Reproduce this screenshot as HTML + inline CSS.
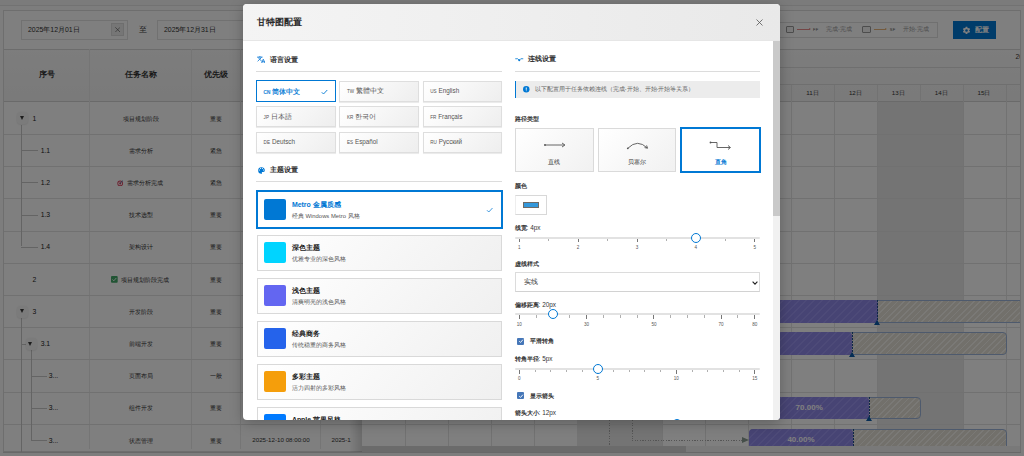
<!DOCTYPE html>
<html><head><meta charset="utf-8">
<style>
*{box-sizing:border-box;margin:0;padding:0}
html,body{width:1024px;height:456px;overflow:hidden;background:#f6f6f6;font-family:"Liberation Sans",sans-serif;color:#333}
.b{position:absolute}
.t{position:absolute;white-space:nowrap}
#page{position:absolute;left:0;top:0;width:1024px;height:456px;overflow:hidden}
#overlay{position:absolute;left:0;top:0;width:1024px;height:456px;background:rgba(0,0,0,0.5)}
#modal{position:absolute;left:243px;top:4px;width:537px;height:416px;background:#fff;border-radius:4px;overflow:hidden;box-shadow:0 3px 14px rgba(0,0,0,0.25)}
</style></head><body>
<div id="page">
<div class="b" style="left:0.00px;top:5.00px;width:1024.00px;height:1.00px;background:#e4e4e4"></div>
<div class="b" style="left:0.00px;top:6.00px;width:1024.00px;height:450.00px;background:#fbfbfb"></div>
<div class="b" style="left:3.00px;top:10.00px;width:1018.00px;height:442.00px;background:#fff;border:1px solid #dcdcdc"></div>
<div class="b" style="left:21.00px;top:20.00px;width:107.00px;height:19.50px;background:#fff;border:1px solid #e2e2e2"></div>
<div class="t" style="left:28.00px;top:25.52px;height:8.97px;line-height:8.97px;font-size:6.9px;color:#333;">2025年12月01日</div>
<div class="b" style="left:111.00px;top:23.00px;width:13.00px;height:12.50px;background:#ececec;border:1px solid #dcdcdc"></div>
<svg class="b" style="left:114.8px;top:26.6px" width="5.4" height="5.4" viewBox="0 0 6 6"><path d="M0.3 0.3L5.7 5.7M5.7 0.3L0.3 5.7" stroke="#555" stroke-width="0.7" fill="none"/></svg>
<div class="t" style="left:138.90px;top:24.66px;height:9.88px;line-height:9.88px;font-size:7.6px;color:#444;">至</div>
<div class="b" style="left:157.00px;top:20.00px;width:107.00px;height:19.50px;background:#fff;border:1px solid #e2e2e2"></div>
<div class="t" style="left:164.00px;top:25.52px;height:8.97px;line-height:8.97px;font-size:6.9px;color:#333;">2025年12月31日</div>
<div class="b" style="left:700.00px;top:21.50px;width:238.00px;height:16.00px;background:#fff;border:1px solid #e0e0e0"></div>
<div class="b" style="left:785.70px;top:26.30px;width:8.30px;height:6.60px;border:1px solid #9a9a9a;background:#f4f4f4;border-radius:1px"></div>
<div class="b" style="left:797.00px;top:29.30px;width:12.60px;height:0.70px;background:#e88a8a"></div>
<div class="b" style="left:808.60px;top:28.10px;width:0;height:0;border-top:1.3px solid transparent;border-bottom:1.3px solid transparent;border-left:2.6px solid #e88a8a"></div>
<div class="t" style="left:813.00px;top:27.20px;height:5.20px;line-height:5.20px;font-size:4.0px;color:#555;letter-spacing:0.3px">FF</div>
<div class="t" style="left:826.00px;top:25.96px;height:7.28px;line-height:7.28px;font-size:5.6px;color:#999;">完成-完成</div>
<div class="b" style="left:862.40px;top:26.30px;width:8.30px;height:6.60px;border:1px solid #9a9a9a;background:#f4f4f4;border-radius:1px"></div>
<div class="b" style="left:873.70px;top:29.30px;width:12.60px;height:0.70px;background:#e8b47a"></div>
<div class="b" style="left:885.30px;top:28.10px;width:0;height:0;border-top:1.3px solid transparent;border-bottom:1.3px solid transparent;border-left:2.6px solid #e8b47a"></div>
<div class="t" style="left:889.70px;top:27.20px;height:5.20px;line-height:5.20px;font-size:4.0px;color:#555;letter-spacing:0.3px">SF</div>
<div class="t" style="left:902.70px;top:25.96px;height:7.28px;line-height:7.28px;font-size:5.6px;color:#999;">开始-完成</div>
<div class="b" style="left:953.00px;top:21.00px;width:43.00px;height:18.00px;background:#0078d4"></div>
<svg class="b" style="left:962px;top:25.5px" width="9" height="9" viewBox="0 0 24 24"><path fill="#fff" d="M19.14 12.94a7.07 7.07 0 000-1.88l2.03-1.58a.5.5 0 00.12-.64l-1.92-3.32a.5.5 0 00-.6-.22l-2.39.96a7 7 0 00-1.63-.94l-.36-2.54A.5.5 0 0013.9 2h-3.84a.5.5 0 00-.49.42l-.36 2.54a7 7 0 00-1.63.94l-2.39-.96a.5.5 0 00-.6.22L2.67 8.48a.5.5 0 00.12.64l2.03 1.58a7.07 7.07 0 000 1.88l-2.03 1.58a.5.5 0 00-.12.64l1.92 3.32a.5.5 0 00.6.22l2.39-.96c.5.38 1.05.7 1.63.94l.36 2.54a.5.5 0 00.49.42h3.84a.5.5 0 00.49-.42l.36-2.54a7 7 0 001.63-.94l2.39.96a.5.5 0 00.6-.22l1.92-3.32a.5.5 0 00-.12-.64zM12 15.5A3.5 3.5 0 1112 8.5a3.5 3.5 0 010 7z"/></svg>
<div class="t" style="left:975.00px;top:25.52px;height:8.97px;line-height:8.97px;font-size:6.9px;color:#fff;font-weight:bold;">配置</div>
<div class="b" style="left:3.50px;top:48.50px;width:1016.50px;height:53.50px;background:linear-gradient(180deg,#fafafa,#f4f4f4)"></div>
<div class="b" style="left:3.50px;top:101.30px;width:1016.50px;height:1.20px;background:#d4d4d4"></div>
<div class="b" style="left:3.50px;top:48.50px;width:1016.50px;height:0.80px;background:#d8d8d8"></div>
<div class="b" style="left:89.20px;top:48.50px;width:0.80px;height:400.00px;background:#ebebeb"></div>
<div class="b" style="left:191.20px;top:48.50px;width:0.80px;height:400.00px;background:#ebebeb"></div>
<div class="b" style="left:240.40px;top:48.50px;width:0.80px;height:400.00px;background:#ebebeb"></div>
<div class="b" style="left:320.30px;top:48.50px;width:0.80px;height:400.00px;background:#ebebeb"></div>
<div class="t" style="left:-153.50px;width:400px;text-align:center;top:69.62px;height:9.75px;line-height:9.75px;font-size:7.5px;color:#333;font-weight:bold;">序号</div>
<div class="t" style="left:-59.40px;width:400px;text-align:center;top:69.62px;height:9.75px;line-height:9.75px;font-size:7.5px;color:#333;font-weight:bold;">任务名称</div>
<div class="t" style="left:16.00px;width:400px;text-align:center;top:69.62px;height:9.75px;line-height:9.75px;font-size:7.5px;color:#333;font-weight:bold;">优先级</div>
<div class="t" style="left:80.50px;width:400px;text-align:center;top:69.62px;height:9.75px;line-height:9.75px;font-size:7.5px;color:#333;font-weight:bold;">开始时间</div>
<div class="t" style="left:145.00px;width:400px;text-align:center;top:69.62px;height:9.75px;line-height:9.75px;font-size:7.5px;color:#333;font-weight:bold;">结束时间</div>
<div class="b" style="left:404.90px;top:84.30px;width:0.80px;height:362.00px;background:#e4e4e4"></div>
<div class="b" style="left:447.80px;top:84.30px;width:0.80px;height:362.00px;background:#e4e4e4"></div>
<div class="b" style="left:490.70px;top:84.30px;width:0.80px;height:362.00px;background:#e4e4e4"></div>
<div class="b" style="left:533.60px;top:84.30px;width:0.80px;height:362.00px;background:#e4e4e4"></div>
<div class="b" style="left:576.50px;top:84.30px;width:0.80px;height:362.00px;background:#e4e4e4"></div>
<div class="b" style="left:619.40px;top:84.30px;width:0.80px;height:362.00px;background:#e4e4e4"></div>
<div class="b" style="left:662.30px;top:84.30px;width:0.80px;height:362.00px;background:#e4e4e4"></div>
<div class="b" style="left:705.20px;top:84.30px;width:0.80px;height:362.00px;background:#e4e4e4"></div>
<div class="b" style="left:748.10px;top:84.30px;width:0.80px;height:362.00px;background:#e4e4e4"></div>
<div class="b" style="left:791.00px;top:84.30px;width:0.80px;height:362.00px;background:#e4e4e4"></div>
<div class="b" style="left:833.90px;top:84.30px;width:0.80px;height:362.00px;background:#e4e4e4"></div>
<div class="b" style="left:876.80px;top:84.30px;width:0.80px;height:362.00px;background:#e4e4e4"></div>
<div class="b" style="left:919.70px;top:84.30px;width:0.80px;height:362.00px;background:#e4e4e4"></div>
<div class="b" style="left:962.60px;top:84.30px;width:0.80px;height:362.00px;background:#e4e4e4"></div>
<div class="b" style="left:1005.50px;top:84.30px;width:0.80px;height:362.00px;background:#e4e4e4"></div>
<div class="b" style="left:577.30px;top:102.30px;width:85.00px;height:344.00px;background:#e8e8e8"></div>
<div class="b" style="left:877.60px;top:102.30px;width:85.00px;height:344.00px;background:#e8e8e8"></div>
<div class="b" style="left:1177.90px;top:102.30px;width:85.00px;height:344.00px;background:#e8e8e8"></div>
<div class="b" style="left:1478.20px;top:102.30px;width:85.00px;height:344.00px;background:#e8e8e8"></div>
<div class="b" style="left:362.00px;top:66.80px;width:658.00px;height:0.80px;background:#dedede"></div>
<div class="b" style="left:362.00px;top:84.30px;width:658.00px;height:0.80px;background:#dedede"></div>
<div class="b" style="left:0;top:0;width:1020px;height:456px;overflow:hidden">
<div class="t" style="left:183.45px;width:400px;text-align:center;top:89.17px;height:8.06px;line-height:8.06px;font-size:6.2px;color:#333;">1日</div>
<div class="t" style="left:226.35px;width:400px;text-align:center;top:89.17px;height:8.06px;line-height:8.06px;font-size:6.2px;color:#333;">2日</div>
<div class="t" style="left:269.25px;width:400px;text-align:center;top:89.17px;height:8.06px;line-height:8.06px;font-size:6.2px;color:#333;">3日</div>
<div class="t" style="left:312.15px;width:400px;text-align:center;top:89.17px;height:8.06px;line-height:8.06px;font-size:6.2px;color:#333;">4日</div>
<div class="t" style="left:355.05px;width:400px;text-align:center;top:89.17px;height:8.06px;line-height:8.06px;font-size:6.2px;color:#333;">5日</div>
<div class="t" style="left:397.95px;width:400px;text-align:center;top:89.17px;height:8.06px;line-height:8.06px;font-size:6.2px;color:#333;">6日</div>
<div class="t" style="left:440.85px;width:400px;text-align:center;top:89.17px;height:8.06px;line-height:8.06px;font-size:6.2px;color:#333;">7日</div>
<div class="t" style="left:483.75px;width:400px;text-align:center;top:89.17px;height:8.06px;line-height:8.06px;font-size:6.2px;color:#333;">8日</div>
<div class="t" style="left:526.65px;width:400px;text-align:center;top:89.17px;height:8.06px;line-height:8.06px;font-size:6.2px;color:#333;">9日</div>
<div class="t" style="left:569.55px;width:400px;text-align:center;top:89.17px;height:8.06px;line-height:8.06px;font-size:6.2px;color:#333;">10日</div>
<div class="t" style="left:612.45px;width:400px;text-align:center;top:89.17px;height:8.06px;line-height:8.06px;font-size:6.2px;color:#333;">11日</div>
<div class="t" style="left:655.35px;width:400px;text-align:center;top:89.17px;height:8.06px;line-height:8.06px;font-size:6.2px;color:#333;">12日</div>
<div class="t" style="left:698.25px;width:400px;text-align:center;top:89.17px;height:8.06px;line-height:8.06px;font-size:6.2px;color:#333;">13日</div>
<div class="t" style="left:741.15px;width:400px;text-align:center;top:89.17px;height:8.06px;line-height:8.06px;font-size:6.2px;color:#333;">14日</div>
<div class="t" style="left:784.05px;width:400px;text-align:center;top:89.17px;height:8.06px;line-height:8.06px;font-size:6.2px;color:#333;">15日</div>
<div class="t" style="left:826.95px;width:400px;text-align:center;top:89.17px;height:8.06px;line-height:8.06px;font-size:6.2px;color:#333;">16日</div>
</div>
<div class="b" style="left:0;top:0;width:1020px;height:456px;overflow:hidden">
<div class="t" style="left:1015.50px;top:53.31px;height:8.58px;line-height:8.58px;font-size:6.6px;color:#333;">2025年12月</div>
</div>
<div class="b" style="left:3.50px;top:133.90px;width:1016.50px;height:1.00px;background:#e3e3e3"></div>
<div class="b" style="left:3.50px;top:166.10px;width:1016.50px;height:1.00px;background:#e3e3e3"></div>
<div class="b" style="left:3.50px;top:198.30px;width:1016.50px;height:1.00px;background:#e3e3e3"></div>
<div class="b" style="left:3.50px;top:230.50px;width:1016.50px;height:1.00px;background:#e3e3e3"></div>
<div class="b" style="left:3.50px;top:262.70px;width:1016.50px;height:1.00px;background:#e3e3e3"></div>
<div class="b" style="left:3.50px;top:294.90px;width:1016.50px;height:1.00px;background:#e3e3e3"></div>
<div class="b" style="left:3.50px;top:327.10px;width:1016.50px;height:1.00px;background:#e3e3e3"></div>
<div class="b" style="left:3.50px;top:359.30px;width:1016.50px;height:1.00px;background:#e3e3e3"></div>
<div class="b" style="left:3.50px;top:391.50px;width:1016.50px;height:1.00px;background:#e3e3e3"></div>
<div class="b" style="left:3.50px;top:423.70px;width:1016.50px;height:1.00px;background:#e3e3e3"></div>
<div class="b" style="left:3.50px;top:455.90px;width:1016.50px;height:1.00px;background:#e3e3e3"></div>
<div class="b" style="left:21.00px;top:124.50px;width:0.90px;height:121.80px;background:#c8c8c8"></div>
<div class="b" style="left:21.00px;top:150.20px;width:17.40px;height:0.90px;background:#c8c8c8"></div>
<div class="b" style="left:21.00px;top:182.40px;width:17.40px;height:0.90px;background:#c8c8c8"></div>
<div class="b" style="left:21.00px;top:214.60px;width:17.40px;height:0.90px;background:#c8c8c8"></div>
<div class="b" style="left:21.00px;top:246.80px;width:17.40px;height:0.90px;background:#c8c8c8"></div>
<div class="b" style="left:21.00px;top:317.60px;width:0.90px;height:134.40px;background:#c8c8c8"></div>
<div class="b" style="left:21.00px;top:343.60px;width:5.00px;height:0.90px;background:#c8c8c8"></div>
<div class="b" style="left:30.50px;top:350.00px;width:0.90px;height:90.40px;background:#c8c8c8"></div>
<div class="b" style="left:30.50px;top:375.60px;width:16.00px;height:0.90px;background:#c8c8c8"></div>
<div class="b" style="left:30.50px;top:407.80px;width:16.00px;height:0.90px;background:#c8c8c8"></div>
<div class="b" style="left:30.50px;top:440.00px;width:16.00px;height:0.90px;background:#c8c8c8"></div>
<div class="b" style="left:16.80px;top:112.30px;width:11.60px;height:12.10px;background:#f7f7f7;border-radius:3.5px;box-shadow:0 0.5px 2px rgba(0,0,0,.12)"></div>
<div class="b" style="left:19.70px;top:116.10px;width:0;height:0;border-left:2.9px solid transparent;border-right:2.9px solid transparent;border-top:4.4px solid #3a3a3a"></div>
<div class="t" style="left:32.50px;top:114.58px;height:8.84px;line-height:8.84px;font-size:6.8px;color:#222;">1</div>
<div class="t" style="left:-59.40px;width:400px;text-align:center;top:114.64px;height:8.32px;line-height:8.32px;font-size:6.4px;color:#333;">项目规划阶段</div>
<div class="t" style="left:16.00px;width:400px;text-align:center;top:114.64px;height:8.32px;line-height:8.32px;font-size:6.4px;color:#333;">重要</div>
<div class="t" style="left:81.00px;width:400px;text-align:center;top:114.37px;height:8.06px;line-height:8.06px;font-size:6.2px;color:#333;">2025-12-10 08:00:00</div>
<div class="b" style="left:0;top:0;width:351px;height:456px;overflow:hidden">
<div class="t" style="left:331.50px;top:114.37px;height:8.06px;line-height:8.06px;font-size:6.2px;color:#333;">2025-12-20 18:00:00</div>
</div>
<div class="t" style="left:40.70px;top:146.78px;height:8.84px;line-height:8.84px;font-size:6.8px;color:#222;">1.1</div>
<div class="t" style="left:-59.40px;width:400px;text-align:center;top:146.84px;height:8.32px;line-height:8.32px;font-size:6.4px;color:#333;">需求分析</div>
<div class="t" style="left:16.00px;width:400px;text-align:center;top:146.84px;height:8.32px;line-height:8.32px;font-size:6.4px;color:#333;">紧急</div>
<div class="t" style="left:81.00px;width:400px;text-align:center;top:146.57px;height:8.06px;line-height:8.06px;font-size:6.2px;color:#333;">2025-12-10 08:00:00</div>
<div class="b" style="left:0;top:0;width:351px;height:456px;overflow:hidden">
<div class="t" style="left:331.50px;top:146.57px;height:8.06px;line-height:8.06px;font-size:6.2px;color:#333;">2025-12-20 18:00:00</div>
</div>
<div class="t" style="left:40.70px;top:178.98px;height:8.84px;line-height:8.84px;font-size:6.8px;color:#222;">1.2</div>
<svg class="b" style="left:117px;top:179.70px" width="6.4" height="6.4" viewBox="0 0 10 10"><circle cx="5" cy="5.3" r="4.5" fill="#d8435f"/><circle cx="5" cy="5.3" r="3" fill="#fff"/><circle cx="5" cy="5.3" r="1.6" fill="#d8435f"/><path d="M5 5L9.5 0.8" stroke="#3a6fb0" stroke-width="1.2"/></svg>
<div class="t" style="left:126.90px;top:179.04px;height:8.32px;line-height:8.32px;font-size:6.4px;color:#333;">需求分析完成</div>
<div class="t" style="left:16.00px;width:400px;text-align:center;top:179.04px;height:8.32px;line-height:8.32px;font-size:6.4px;color:#333;">紧急</div>
<div class="t" style="left:81.00px;width:400px;text-align:center;top:178.77px;height:8.06px;line-height:8.06px;font-size:6.2px;color:#333;">2025-12-10 08:00:00</div>
<div class="b" style="left:0;top:0;width:351px;height:456px;overflow:hidden">
<div class="t" style="left:331.50px;top:178.77px;height:8.06px;line-height:8.06px;font-size:6.2px;color:#333;">2025-12-20 18:00:00</div>
</div>
<div class="t" style="left:40.70px;top:211.18px;height:8.84px;line-height:8.84px;font-size:6.8px;color:#222;">1.3</div>
<div class="t" style="left:-59.40px;width:400px;text-align:center;top:211.24px;height:8.32px;line-height:8.32px;font-size:6.4px;color:#333;">技术选型</div>
<div class="t" style="left:16.00px;width:400px;text-align:center;top:211.24px;height:8.32px;line-height:8.32px;font-size:6.4px;color:#333;">重要</div>
<div class="t" style="left:81.00px;width:400px;text-align:center;top:210.97px;height:8.06px;line-height:8.06px;font-size:6.2px;color:#333;">2025-12-10 08:00:00</div>
<div class="b" style="left:0;top:0;width:351px;height:456px;overflow:hidden">
<div class="t" style="left:331.50px;top:210.97px;height:8.06px;line-height:8.06px;font-size:6.2px;color:#333;">2025-12-20 18:00:00</div>
</div>
<div class="t" style="left:40.70px;top:243.38px;height:8.84px;line-height:8.84px;font-size:6.8px;color:#222;">1.4</div>
<div class="t" style="left:-59.40px;width:400px;text-align:center;top:243.44px;height:8.32px;line-height:8.32px;font-size:6.4px;color:#333;">架构设计</div>
<div class="t" style="left:16.00px;width:400px;text-align:center;top:243.44px;height:8.32px;line-height:8.32px;font-size:6.4px;color:#333;">重要</div>
<div class="t" style="left:81.00px;width:400px;text-align:center;top:243.17px;height:8.06px;line-height:8.06px;font-size:6.2px;color:#333;">2025-12-10 08:00:00</div>
<div class="b" style="left:0;top:0;width:351px;height:456px;overflow:hidden">
<div class="t" style="left:331.50px;top:243.17px;height:8.06px;line-height:8.06px;font-size:6.2px;color:#333;">2025-12-20 18:00:00</div>
</div>
<div class="t" style="left:32.50px;top:275.58px;height:8.84px;line-height:8.84px;font-size:6.8px;color:#222;">2</div>
<svg class="b" style="left:110.9px;top:276.20px" width="6.7" height="6.7" viewBox="0 0 10 10"><rect width="10" height="10" rx="1.5" fill="#43a868"/><path d="M2.2 5.2L4.2 7.2L7.9 3" stroke="#fff" stroke-width="1.3" fill="none"/></svg>
<div class="t" style="left:120.70px;top:275.64px;height:8.32px;line-height:8.32px;font-size:6.4px;color:#333;">项目规划阶段完成</div>
<div class="t" style="left:16.00px;width:400px;text-align:center;top:275.64px;height:8.32px;line-height:8.32px;font-size:6.4px;color:#333;">重要</div>
<div class="t" style="left:81.00px;width:400px;text-align:center;top:275.37px;height:8.06px;line-height:8.06px;font-size:6.2px;color:#333;">2025-12-10 08:00:00</div>
<div class="b" style="left:0;top:0;width:351px;height:456px;overflow:hidden">
<div class="t" style="left:331.50px;top:275.37px;height:8.06px;line-height:8.06px;font-size:6.2px;color:#333;">2025-12-20 18:00:00</div>
</div>
<div class="b" style="left:16.80px;top:305.50px;width:11.60px;height:12.10px;background:#f7f7f7;border-radius:3.5px;box-shadow:0 0.5px 2px rgba(0,0,0,.12)"></div>
<div class="b" style="left:19.70px;top:309.30px;width:0;height:0;border-left:2.9px solid transparent;border-right:2.9px solid transparent;border-top:4.4px solid #3a3a3a"></div>
<div class="t" style="left:32.50px;top:307.78px;height:8.84px;line-height:8.84px;font-size:6.8px;color:#222;">3</div>
<div class="t" style="left:-59.40px;width:400px;text-align:center;top:307.84px;height:8.32px;line-height:8.32px;font-size:6.4px;color:#333;">开发阶段</div>
<div class="t" style="left:16.00px;width:400px;text-align:center;top:307.84px;height:8.32px;line-height:8.32px;font-size:6.4px;color:#333;">重要</div>
<div class="t" style="left:81.00px;width:400px;text-align:center;top:307.57px;height:8.06px;line-height:8.06px;font-size:6.2px;color:#333;">2025-12-10 08:00:00</div>
<div class="b" style="left:0;top:0;width:351px;height:456px;overflow:hidden">
<div class="t" style="left:331.50px;top:307.57px;height:8.06px;line-height:8.06px;font-size:6.2px;color:#333;">2025-12-20 18:00:00</div>
</div>
<div class="b" style="left:25.50px;top:337.70px;width:11.60px;height:12.10px;background:#f7f7f7;border-radius:3.5px;box-shadow:0 0.5px 2px rgba(0,0,0,.12)"></div>
<div class="b" style="left:28.40px;top:341.50px;width:0;height:0;border-left:2.9px solid transparent;border-right:2.9px solid transparent;border-top:4.4px solid #3a3a3a"></div>
<div class="t" style="left:40.70px;top:339.98px;height:8.84px;line-height:8.84px;font-size:6.8px;color:#222;">3.1</div>
<div class="t" style="left:-59.40px;width:400px;text-align:center;top:340.04px;height:8.32px;line-height:8.32px;font-size:6.4px;color:#333;">前端开发</div>
<div class="t" style="left:16.00px;width:400px;text-align:center;top:340.04px;height:8.32px;line-height:8.32px;font-size:6.4px;color:#333;">重要</div>
<div class="t" style="left:81.00px;width:400px;text-align:center;top:339.77px;height:8.06px;line-height:8.06px;font-size:6.2px;color:#333;">2025-12-10 08:00:00</div>
<div class="b" style="left:0;top:0;width:351px;height:456px;overflow:hidden">
<div class="t" style="left:331.50px;top:339.77px;height:8.06px;line-height:8.06px;font-size:6.2px;color:#333;">2025-12-20 18:00:00</div>
</div>
<div class="t" style="left:48.80px;top:372.18px;height:8.84px;line-height:8.84px;font-size:6.8px;color:#222;">3...</div>
<div class="t" style="left:-59.40px;width:400px;text-align:center;top:372.24px;height:8.32px;line-height:8.32px;font-size:6.4px;color:#333;">页面布局</div>
<div class="t" style="left:16.00px;width:400px;text-align:center;top:372.24px;height:8.32px;line-height:8.32px;font-size:6.4px;color:#333;">一般</div>
<div class="t" style="left:81.00px;width:400px;text-align:center;top:371.97px;height:8.06px;line-height:8.06px;font-size:6.2px;color:#333;">2025-12-10 08:00:00</div>
<div class="b" style="left:0;top:0;width:351px;height:456px;overflow:hidden">
<div class="t" style="left:331.50px;top:371.97px;height:8.06px;line-height:8.06px;font-size:6.2px;color:#333;">2025-12-20 18:00:00</div>
</div>
<div class="t" style="left:48.80px;top:404.38px;height:8.84px;line-height:8.84px;font-size:6.8px;color:#222;">3...</div>
<div class="t" style="left:-59.40px;width:400px;text-align:center;top:404.44px;height:8.32px;line-height:8.32px;font-size:6.4px;color:#333;">组件开发</div>
<div class="t" style="left:16.00px;width:400px;text-align:center;top:404.44px;height:8.32px;line-height:8.32px;font-size:6.4px;color:#333;">重要</div>
<div class="t" style="left:81.00px;width:400px;text-align:center;top:404.17px;height:8.06px;line-height:8.06px;font-size:6.2px;color:#333;">2025-12-10 08:00:00</div>
<div class="b" style="left:0;top:0;width:351px;height:456px;overflow:hidden">
<div class="t" style="left:331.50px;top:404.17px;height:8.06px;line-height:8.06px;font-size:6.2px;color:#333;">2025-12-20 18:00:00</div>
</div>
<div class="t" style="left:48.80px;top:436.58px;height:8.84px;line-height:8.84px;font-size:6.8px;color:#222;">3...</div>
<div class="t" style="left:-59.40px;width:400px;text-align:center;top:436.64px;height:8.32px;line-height:8.32px;font-size:6.4px;color:#333;">状态管理</div>
<div class="t" style="left:16.00px;width:400px;text-align:center;top:436.64px;height:8.32px;line-height:8.32px;font-size:6.4px;color:#333;">重要</div>
<div class="t" style="left:81.00px;width:400px;text-align:center;top:436.37px;height:8.06px;line-height:8.06px;font-size:6.2px;color:#333;">2025-12-10 08:00:00</div>
<div class="b" style="left:0;top:0;width:351px;height:456px;overflow:hidden">
<div class="t" style="left:331.50px;top:436.37px;height:8.06px;line-height:8.06px;font-size:6.2px;color:#333;">2025-12-20 18:00:00</div>
</div>
<div class="b" style="left:349.00px;top:48.50px;width:13.00px;height:404.00px;background:linear-gradient(90deg,rgba(0,0,0,0),rgba(0,0,0,0.16))"></div>
<div class="b" style="left:0;top:0;width:1024px;height:456px;clip-path:inset(102px 4px 10px 362px)">
<div class="b" style="left:600.00px;top:300.20px;width:500.00px;height:22.50px;border-radius:4px;border:1px solid #9db5da;background:repeating-linear-gradient(-45deg,#e4e0d6 0 3.3px,#f4f2ec 3.3px 4.5px)"></div>
<div class="b" style="left:600.00px;top:300.20px;width:277.70px;height:22.50px;border-radius:4px;background:repeating-linear-gradient(-45deg,#8f88e8 0 4.2px,#9b94f0 4.2px 5.6px)"></div>
<div class="b" style="left:877.20px;top:300.20px;width:1.20px;height:22.50px;background:repeating-linear-gradient(180deg,#1e4e8c 0 2px,transparent 2px 3px)"></div>
<div class="b" style="left:874.10px;top:319.50px;width:0;height:0;border-left:3.6px solid transparent;border-right:3.6px solid transparent;border-bottom:5.4px solid #0a5aa8"></div>
<div class="b" style="left:600px;top:0;width:0;height:0"></div>
<div class="b" style="left:620.00px;top:332.40px;width:386.60px;height:22.50px;border-radius:4px;border:1px solid #9db5da;background:repeating-linear-gradient(-45deg,#e4e0d6 0 3.3px,#f4f2ec 3.3px 4.5px)"></div>
<div class="b" style="left:620.00px;top:332.40px;width:232.30px;height:22.50px;border-radius:4px;background:repeating-linear-gradient(-45deg,#8f88e8 0 4.2px,#9b94f0 4.2px 5.6px)"></div>
<div class="b" style="left:851.80px;top:332.40px;width:1.20px;height:22.50px;background:repeating-linear-gradient(180deg,#1e4e8c 0 2px,transparent 2px 3px)"></div>
<div class="b" style="left:848.70px;top:351.70px;width:0;height:0;border-left:3.6px solid transparent;border-right:3.6px solid transparent;border-bottom:5.4px solid #0a5aa8"></div>
<div class="b" style="left:640.00px;top:396.80px;width:281.40px;height:22.50px;border-radius:4px;border:1px solid #9db5da;background:repeating-linear-gradient(-45deg,#e4e0d6 0 3.3px,#f4f2ec 3.3px 4.5px)"></div>
<div class="b" style="left:640.00px;top:396.80px;width:229.20px;height:22.50px;border-radius:4px;background:repeating-linear-gradient(-45deg,#8f88e8 0 4.2px,#9b94f0 4.2px 5.6px)"></div>
<div class="b" style="left:868.70px;top:396.80px;width:1.20px;height:22.50px;background:repeating-linear-gradient(180deg,#1e4e8c 0 2px,transparent 2px 3px)"></div>
<div class="b" style="left:865.60px;top:416.10px;width:0;height:0;border-left:3.6px solid transparent;border-right:3.6px solid transparent;border-bottom:5.4px solid #0a5aa8"></div>
<div class="t" style="left:609.20px;width:400px;text-align:center;top:403.15px;height:10.40px;line-height:10.40px;font-size:8.0px;color:#fff;font-weight:bold;">70.00%</div>
<div class="b" style="left:749.00px;top:429.00px;width:258.00px;height:22.50px;border-radius:4px;border:1px solid #9db5da;background:repeating-linear-gradient(-45deg,#e4e0d6 0 3.3px,#f4f2ec 3.3px 4.5px)"></div>
<div class="b" style="left:749.00px;top:429.00px;width:104.00px;height:22.50px;border-radius:4px;background:repeating-linear-gradient(-45deg,#8f88e8 0 4.2px,#9b94f0 4.2px 5.6px)"></div>
<div class="b" style="left:852.50px;top:429.00px;width:1.20px;height:22.50px;background:repeating-linear-gradient(180deg,#1e4e8c 0 2px,transparent 2px 3px)"></div>
<div class="b" style="left:849.40px;top:448.30px;width:0;height:0;border-left:3.6px solid transparent;border-right:3.6px solid transparent;border-bottom:5.4px solid #0a5aa8"></div>
<div class="t" style="left:601.00px;width:400px;text-align:center;top:435.35px;height:10.40px;line-height:10.40px;font-size:8.0px;color:#fff;font-weight:bold;">40.00%</div>
<div class="b" style="left:608.90px;top:420.00px;width:0.90px;height:30.00px;background:repeating-linear-gradient(180deg,#aaaaaa 0 1.2px,transparent 1.2px 2.6px)"></div>
<div class="b" style="left:631.70px;top:420.00px;width:0.90px;height:20.50px;background:repeating-linear-gradient(180deg,#aaaaaa 0 1.2px,transparent 1.2px 2.6px)"></div>
<div class="b" style="left:631.70px;top:439.80px;width:111.00px;height:0.90px;background:repeating-linear-gradient(90deg,#aaaaaa 0 1.2px,transparent 1.2px 2.6px)"></div>
<div class="b" style="left:742.4px;top:436.6px;width:0;height:0;border-top:3.6px solid transparent;border-bottom:3.6px solid transparent;border-left:7px solid #8a9c92"></div>
</div>
<div class="b" style="left:362.00px;top:446.00px;width:658.00px;height:6.00px;background:#f3f3f3"></div>
<div class="b" style="left:362.00px;top:446.00px;width:324.00px;height:6.00px;background:#d6d6d6"></div>
<div class="b" style="left:3.00px;top:451.50px;width:1018.00px;height:1.00px;background:#d0d0d0"></div>
<div class="b" style="left:1019.50px;top:10.00px;width:1.00px;height:442.00px;background:#dcdcdc"></div>
</div>
<div id="overlay"></div>
<div id="modal">
<div class="b" style="left:0.00px;top:0.00px;width:537.00px;height:36.00px;background:linear-gradient(90deg,#f4f4f4,#e9e9e9)"></div>
<div class="b" style="left:0.00px;top:35.50px;width:537.00px;height:0.80px;background:#e6e6e6"></div>
<div class="t" style="left:14.00px;top:12.39px;height:12.03px;line-height:12.03px;font-size:9.25px;color:#2a2a2a;font-weight:bold;">甘特图配置</div>
<svg class="b" style="left:512.6px;top:14.8px" width="7" height="7" viewBox="0 0 7 7"><path d="M0.5 0.5L6.5 6.5M6.5 0.5L0.5 6.5" stroke="#555" stroke-width="0.8" fill="none"/></svg>
<svg class="b" style="left:13.600000000000023px;top:51.8px" width="8.4" height="7.4" viewBox="0 0 8.4 7.4"><g stroke="#1a80d8" stroke-width="0.9" fill="none" stroke-linecap="round"><path d="M0.6 1.1H5.2M2.9 0.3V1.1M1.2 1.6L4.6 5.2M4.4 1.6L0.9 5"/><path d="M4.6 7.1L6.3 3.2L8 7.1M5.2 5.8H7.4"/></g></svg>
<div class="t" style="left:27.00px;top:50.64px;height:9.71px;line-height:9.71px;font-size:7.47px;color:#333;font-weight:bold;">语言设置</div>
<div class="b" style="left:13.00px;top:67.00px;width:246.00px;height:1.00px;background:#dcdcdc"></div>
<div class="b" style="left:12.60px;top:76.00px;width:80.70px;height:22.00px;background:#fff;border:1.6px solid #0078d4"></div>
<div class="t" style="left:20.60px;top:84.11px;height:8.97px;line-height:8.97px;font-size:6.9px;color:#0078d4;-webkit-text-stroke:0.2px #0078d4"><span style="font-size:4.6px;font-weight:normal">CN</span> 简体中文</div>
<svg class="b" style="left:78.10px;top:84.50px" width="7" height="6" viewBox="0 0 14 12"><path d="M1.5 6.5L5 10L12.5 2" stroke="#0078d4" stroke-width="1.8" fill="none"/></svg>
<div class="b" style="left:96.40px;top:76.50px;width:79.70px;height:21.00px;background:linear-gradient(135deg,#ffffff,#eeeeee);border:1px solid #dedede;box-shadow:0 0.5px 0.6px rgba(0,0,0,.08)"></div>
<div class="t" style="left:103.90px;top:83.31px;height:8.97px;line-height:8.97px;font-size:6.9px;color:#555;"><span style="font-size:4.6px">TW</span> 繁體中文</div>
<div class="b" style="left:179.70px;top:76.50px;width:79.70px;height:21.00px;background:linear-gradient(135deg,#ffffff,#eeeeee);border:1px solid #dedede;box-shadow:0 0.5px 0.6px rgba(0,0,0,.08)"></div>
<div class="t" style="left:187.20px;top:83.31px;height:8.97px;line-height:8.97px;font-size:6.9px;color:#555;"><span style="font-size:4.6px">US</span> <span style="font-size:6.3px">English</span></div>
<div class="b" style="left:13.10px;top:102.00px;width:79.70px;height:21.00px;background:linear-gradient(135deg,#ffffff,#eeeeee);border:1px solid #dedede;box-shadow:0 0.5px 0.6px rgba(0,0,0,.08)"></div>
<div class="t" style="left:20.60px;top:108.81px;height:8.97px;line-height:8.97px;font-size:6.9px;color:#555;"><span style="font-size:4.6px">JP</span> 日本語</div>
<div class="b" style="left:96.40px;top:102.00px;width:79.70px;height:21.00px;background:linear-gradient(135deg,#ffffff,#eeeeee);border:1px solid #dedede;box-shadow:0 0.5px 0.6px rgba(0,0,0,.08)"></div>
<div class="t" style="left:103.90px;top:108.81px;height:8.97px;line-height:8.97px;font-size:6.9px;color:#555;"><span style="font-size:4.6px">KR</span> 한국어</div>
<div class="b" style="left:179.70px;top:102.00px;width:79.70px;height:21.00px;background:linear-gradient(135deg,#ffffff,#eeeeee);border:1px solid #dedede;box-shadow:0 0.5px 0.6px rgba(0,0,0,.08)"></div>
<div class="t" style="left:187.20px;top:108.81px;height:8.97px;line-height:8.97px;font-size:6.9px;color:#555;"><span style="font-size:4.6px">FR</span> <span style="font-size:6.3px">Français</span></div>
<div class="b" style="left:13.10px;top:127.50px;width:79.70px;height:21.00px;background:linear-gradient(135deg,#ffffff,#eeeeee);border:1px solid #dedede;box-shadow:0 0.5px 0.6px rgba(0,0,0,.08)"></div>
<div class="t" style="left:20.60px;top:134.31px;height:8.97px;line-height:8.97px;font-size:6.9px;color:#555;"><span style="font-size:4.6px">DE</span> <span style="font-size:6.3px">Deutsch</span></div>
<div class="b" style="left:96.40px;top:127.50px;width:79.70px;height:21.00px;background:linear-gradient(135deg,#ffffff,#eeeeee);border:1px solid #dedede;box-shadow:0 0.5px 0.6px rgba(0,0,0,.08)"></div>
<div class="t" style="left:103.90px;top:134.31px;height:8.97px;line-height:8.97px;font-size:6.9px;color:#555;"><span style="font-size:4.6px">ES</span> <span style="font-size:6.3px">Español</span></div>
<div class="b" style="left:179.70px;top:127.50px;width:79.70px;height:21.00px;background:linear-gradient(135deg,#ffffff,#eeeeee);border:1px solid #dedede;box-shadow:0 0.5px 0.6px rgba(0,0,0,.08)"></div>
<div class="t" style="left:187.20px;top:134.31px;height:8.97px;line-height:8.97px;font-size:6.9px;color:#555;"><span style="font-size:4.6px">RU</span> <span style="font-size:6.3px">Русский</span></div>
<svg class="b" style="left:14.5px;top:162.7px" width="7" height="7" viewBox="2.5 2.5 19 19"><path fill="#0078d4" d="M12 3a9 9 0 000 18c.83 0 1.5-.67 1.5-1.5 0-.39-.15-.74-.39-1.01-.23-.26-.38-.61-.38-.99 0-.83.67-1.5 1.5-1.5H16a5 5 0 005-5c0-4.42-4.03-8-9-8zm-5.5 9a1.5 1.5 0 110-3 1.5 1.5 0 010 3zm3-4a1.5 1.5 0 110-3 1.5 1.5 0 010 3zm5 0a1.5 1.5 0 110-3 1.5 1.5 0 010 3zm3 4a1.5 1.5 0 110-3 1.5 1.5 0 010 3z"/></svg>
<div class="t" style="left:27.00px;top:161.34px;height:9.71px;line-height:9.71px;font-size:7.47px;color:#333;font-weight:bold;">主题设置</div>
<div class="b" style="left:13.00px;top:177.20px;width:246.00px;height:1.00px;background:#dcdcdc"></div>
<div class="b" style="left:12.60px;top:186.20px;width:247.00px;height:38.60px;background:#fff;border:2px solid #0078d4"></div>
<div class="t" style="left:48.90px;top:196.00px;height:9.01px;line-height:9.01px;font-size:6.93px;color:#0078d4;font-weight:bold;">Metro 金属质感</div>
<svg class="b" style="left:243.00px;top:202.80px" width="7.5" height="6" viewBox="0 0 14 12"><path d="M1.5 6.5L5 10L12.5 2" stroke="#0078d4" stroke-width="1.5" fill="none"/></svg>
<div class="b" style="left:21.00px;top:194.70px;width:21.50px;height:21.80px;background:#0078d4;border-radius:2px"></div>
<div class="t" style="left:48.90px;top:208.78px;height:7.63px;line-height:7.63px;font-size:5.87px;color:#555;">经典 Windows Metro 风格</div>
<div class="b" style="left:13.60px;top:230.50px;width:245.20px;height:36.50px;background:linear-gradient(135deg,#ffffff,#f0f0f0);border:1px solid #d9d9d9"></div>
<div class="t" style="left:48.90px;top:239.00px;height:9.01px;line-height:9.01px;font-size:6.93px;color:#222;font-weight:bold;">深色主题</div>
<div class="b" style="left:21.00px;top:237.70px;width:21.50px;height:21.80px;background:#00d4ff;border-radius:2px"></div>
<div class="t" style="left:48.90px;top:251.78px;height:7.63px;line-height:7.63px;font-size:5.87px;color:#555;">优雅专业的深色风格</div>
<div class="b" style="left:13.60px;top:273.50px;width:245.20px;height:36.50px;background:linear-gradient(135deg,#ffffff,#f0f0f0);border:1px solid #d9d9d9"></div>
<div class="t" style="left:48.90px;top:282.00px;height:9.01px;line-height:9.01px;font-size:6.93px;color:#222;font-weight:bold;">浅色主题</div>
<div class="b" style="left:21.00px;top:280.70px;width:21.50px;height:21.80px;background:#6366f1;border-radius:2px"></div>
<div class="t" style="left:48.90px;top:294.78px;height:7.63px;line-height:7.63px;font-size:5.87px;color:#555;">清爽明亮的浅色风格</div>
<div class="b" style="left:13.60px;top:316.50px;width:245.20px;height:36.50px;background:linear-gradient(135deg,#ffffff,#f0f0f0);border:1px solid #d9d9d9"></div>
<div class="t" style="left:48.90px;top:325.00px;height:9.01px;line-height:9.01px;font-size:6.93px;color:#222;font-weight:bold;">经典商务</div>
<div class="b" style="left:21.00px;top:323.70px;width:21.50px;height:21.80px;background:#2563eb;border-radius:2px"></div>
<div class="t" style="left:48.90px;top:337.78px;height:7.63px;line-height:7.63px;font-size:5.87px;color:#555;">传统稳重的商务风格</div>
<div class="b" style="left:13.60px;top:359.50px;width:245.20px;height:36.50px;background:linear-gradient(135deg,#ffffff,#f0f0f0);border:1px solid #d9d9d9"></div>
<div class="t" style="left:48.90px;top:368.00px;height:9.01px;line-height:9.01px;font-size:6.93px;color:#222;font-weight:bold;">多彩主题</div>
<div class="b" style="left:21.00px;top:366.70px;width:21.50px;height:21.80px;background:#f59e0b;border-radius:2px"></div>
<div class="t" style="left:48.90px;top:380.78px;height:7.63px;line-height:7.63px;font-size:5.87px;color:#555;">活力四射的多彩风格</div>
<div class="b" style="left:13.60px;top:402.50px;width:245.20px;height:36.50px;background:linear-gradient(135deg,#ffffff,#f0f0f0);border:1px solid #d9d9d9"></div>
<div class="t" style="left:48.90px;top:411.00px;height:9.01px;line-height:9.01px;font-size:6.93px;color:#222;font-weight:bold;">Apple 苹果风格</div>
<div class="b" style="left:21.00px;top:409.70px;width:21.50px;height:21.80px;background:#007aff;border-radius:2px"></div>
<div class="t" style="left:48.90px;top:423.78px;height:7.63px;line-height:7.63px;font-size:5.87px;color:#555;">简洁优雅的苹果风格</div>
<svg class="b" style="left:272px;top:52.5px" width="8.5" height="5" viewBox="0 0 17 10"><path d="M0.5 3.5H5.5L8.5 6.5L11.5 3.5H16.5" stroke="#0078d4" stroke-width="1.6" fill="none"/><circle cx="8.5" cy="6.5" r="2" fill="#0078d4"/></svg>
<div class="t" style="left:284.50px;top:50.44px;height:9.71px;line-height:9.71px;font-size:7.47px;color:#333;font-weight:bold;">连线设置</div>
<div class="b" style="left:272.00px;top:67.00px;width:245.00px;height:1.00px;background:#dcdcdc"></div>
<div class="b" style="left:271.70px;top:76.70px;width:245.30px;height:17.00px;background:#ececec;border-left:1.6px solid #0078d4"></div>
<svg class="b" style="left:280.20000000000005px;top:82px" width="6.5" height="6.5" viewBox="0 0 10 10"><circle cx="5" cy="5" r="5" fill="#0078d4"/><path d="M5 2.3V5.8" stroke="#fff" stroke-width="1.4"/><circle cx="5" cy="7.4" r="0.75" fill="#fff"/></svg>
<div class="t" style="left:291.60px;top:82.48px;height:7.63px;line-height:7.63px;font-size:5.87px;color:#666;">以下配置用于任务依赖连线（完成-开始、开始-开始等关系）</div>
<div class="t" style="left:271.60px;top:110.54px;height:8.32px;line-height:8.32px;font-size:6.4px;color:#333;font-weight:bold;">路径类型</div>
<div class="b" style="left:272.10px;top:124.20px;width:78.60px;height:44.30px;background:linear-gradient(135deg,#ffffff,#f1f1f1);border:1px solid #dadada"></div>
<div class="t" style="left:111.40px;width:400px;text-align:center;top:154.78px;height:7.63px;line-height:7.63px;font-size:5.87px;color:#333;">直线</div>
<div class="b" style="left:354.90px;top:124.20px;width:78.60px;height:44.30px;background:linear-gradient(135deg,#ffffff,#f1f1f1);border:1px solid #dadada"></div>
<div class="t" style="left:194.20px;width:400px;text-align:center;top:154.78px;height:7.63px;line-height:7.63px;font-size:5.87px;color:#333;">贝塞尔</div>
<div class="b" style="left:437.20px;top:123.40px;width:80.70px;height:46.00px;background:#fff;border:2px solid #0078d4"></div>
<div class="t" style="left:277.70px;width:400px;text-align:center;top:154.78px;height:7.63px;line-height:7.63px;font-size:5.87px;color:#0078d4;font-weight:bold;">直角</div>
<svg class="b" style="left:301px;top:136px" width="22" height="10" viewBox="0 0 22 10"><path d="M0.5 5H20" stroke="#555" stroke-width="0.9" fill="none"/><path d="M18 3L21 5L18 7" stroke="#555" stroke-width="0.9" fill="none"/><circle cx="1" cy="5" r="0.9" fill="#555"/></svg>
<svg class="b" style="left:383px;top:136px" width="24" height="10" viewBox="0 0 24 10"><path d="M1.8 8.3Q11.5 -1.5 21.3 8" stroke="#555" stroke-width="0.9" fill="none"/><path d="M18.6 7.6L21.5 8.2L20.6 5.4" stroke="#555" stroke-width="0.9" fill="none"/><circle cx="1.8" cy="8.3" r="0.9" fill="#555"/></svg>
<svg class="b" style="left:466px;top:136.2px" width="24" height="12" viewBox="0 0 24 12"><path d="M1.5 2.5H8V7.5H21" stroke="#555" stroke-width="0.9" fill="none"/><path d="M19 5.5L21.5 7.5L19 9.5" stroke="#555" stroke-width="0.9" fill="none"/><circle cx="1.5" cy="2.5" r="0.9" fill="#555"/></svg>
<div class="t" style="left:271.60px;top:178.04px;height:8.32px;line-height:8.32px;font-size:6.4px;color:#333;font-weight:bold;">颜色</div>
<div class="b" style="left:271.80px;top:191.20px;width:31.80px;height:19.40px;background:#fff;border:1px solid #d8d8d8;border-left-color:#eeeeee"></div>
<div class="b" style="left:280.00px;top:198.00px;width:15.80px;height:5.80px;background:#3498db;border:0.7px solid #6e6a66"></div>
<div class="t" style="left:271.60px;top:219.84px;height:8.32px;line-height:8.32px;font-size:6.4px;color:#333;font-weight:bold;">线宽<span style="font-weight:normal">: 4px</span></div>
<div class="b" style="left:272.10px;top:232.60px;width:244.80px;height:2.00px;background:#e2e2e2;border-radius:1px"></div>
<div class="b" style="left:275.80px;top:234.80px;width:0.80px;height:3.60px;background:#777"></div>
<div class="b" style="left:305.24px;top:234.80px;width:0.80px;height:2.40px;background:#b0b0b0"></div>
<div class="b" style="left:334.68px;top:234.80px;width:0.80px;height:3.60px;background:#777"></div>
<div class="b" style="left:364.11px;top:234.80px;width:0.80px;height:2.40px;background:#b0b0b0"></div>
<div class="b" style="left:393.55px;top:234.80px;width:0.80px;height:3.60px;background:#777"></div>
<div class="b" style="left:422.99px;top:234.80px;width:0.80px;height:2.40px;background:#b0b0b0"></div>
<div class="b" style="left:452.43px;top:234.80px;width:0.80px;height:3.60px;background:#777"></div>
<div class="b" style="left:481.86px;top:234.80px;width:0.80px;height:2.40px;background:#b0b0b0"></div>
<div class="b" style="left:511.30px;top:234.80px;width:0.80px;height:3.60px;background:#777"></div>
<div class="t" style="left:76.20px;width:400px;text-align:center;top:241.01px;height:5.98px;line-height:5.98px;font-size:4.6px;color:#555;">1</div>
<div class="t" style="left:135.08px;width:400px;text-align:center;top:241.01px;height:5.98px;line-height:5.98px;font-size:4.6px;color:#555;">2</div>
<div class="t" style="left:193.95px;width:400px;text-align:center;top:241.01px;height:5.98px;line-height:5.98px;font-size:4.6px;color:#555;">3</div>
<div class="t" style="left:252.83px;width:400px;text-align:center;top:241.01px;height:5.98px;line-height:5.98px;font-size:4.6px;color:#555;">4</div>
<div class="t" style="left:311.70px;width:400px;text-align:center;top:241.01px;height:5.98px;line-height:5.98px;font-size:4.6px;color:#555;">5</div>
<div class="b" style="left:447.90px;top:228.60px;width:10.00px;height:10.00px;background:#fff;border:1.5px solid #0078d4;border-radius:50%"></div>
<div class="t" style="left:271.60px;top:255.74px;height:8.32px;line-height:8.32px;font-size:6.4px;color:#333;font-weight:bold;">虚线样式</div>
<div class="b" style="left:272.10px;top:268.30px;width:244.80px;height:19.80px;background:#fff;border:1px solid #dcdcdc;border-bottom-color:#d2d2d2"></div>
<div class="t" style="left:280.60px;top:273.91px;height:8.97px;line-height:8.97px;font-size:6.9px;color:#333;">实线</div>
<svg class="b" style="left:508.70000000000005px;top:276.9px" width="6" height="4" viewBox="0 0 6 4"><path d="M0.6 0.6L3 3.2L5.4 0.6" stroke="#222" stroke-width="1.1" fill="none"/></svg>
<div class="t" style="left:271.60px;top:296.74px;height:8.32px;line-height:8.32px;font-size:6.4px;color:#333;font-weight:bold;">偏移距离<span style="font-weight:normal">: 20px</span></div>
<div class="b" style="left:272.10px;top:309.20px;width:244.80px;height:2.00px;background:#e2e2e2;border-radius:1px"></div>
<div class="b" style="left:275.80px;top:311.40px;width:0.80px;height:3.60px;background:#777"></div>
<div class="b" style="left:292.62px;top:311.40px;width:0.80px;height:2.40px;background:#b0b0b0"></div>
<div class="b" style="left:309.44px;top:311.40px;width:0.80px;height:2.40px;background:#b0b0b0"></div>
<div class="b" style="left:326.26px;top:311.40px;width:0.80px;height:2.40px;background:#b0b0b0"></div>
<div class="b" style="left:343.08px;top:311.40px;width:0.80px;height:3.60px;background:#777"></div>
<div class="b" style="left:359.90px;top:311.40px;width:0.80px;height:2.40px;background:#b0b0b0"></div>
<div class="b" style="left:376.72px;top:311.40px;width:0.80px;height:2.40px;background:#b0b0b0"></div>
<div class="b" style="left:393.54px;top:311.40px;width:0.80px;height:2.40px;background:#b0b0b0"></div>
<div class="b" style="left:410.36px;top:311.40px;width:0.80px;height:3.60px;background:#777"></div>
<div class="b" style="left:427.18px;top:311.40px;width:0.80px;height:2.40px;background:#b0b0b0"></div>
<div class="b" style="left:444.00px;top:311.40px;width:0.80px;height:2.40px;background:#b0b0b0"></div>
<div class="b" style="left:460.82px;top:311.40px;width:0.80px;height:2.40px;background:#b0b0b0"></div>
<div class="b" style="left:477.64px;top:311.40px;width:0.80px;height:3.60px;background:#777"></div>
<div class="b" style="left:494.46px;top:311.40px;width:0.80px;height:2.40px;background:#b0b0b0"></div>
<div class="b" style="left:511.28px;top:311.40px;width:0.80px;height:3.60px;background:#777"></div>
<div class="t" style="left:76.20px;width:400px;text-align:center;top:317.61px;height:5.98px;line-height:5.98px;font-size:4.6px;color:#555;">10</div>
<div class="t" style="left:143.50px;width:400px;text-align:center;top:317.61px;height:5.98px;line-height:5.98px;font-size:4.6px;color:#555;">30</div>
<div class="t" style="left:211.00px;width:400px;text-align:center;top:317.61px;height:5.98px;line-height:5.98px;font-size:4.6px;color:#555;">50</div>
<div class="t" style="left:278.00px;width:400px;text-align:center;top:317.61px;height:5.98px;line-height:5.98px;font-size:4.6px;color:#555;">70</div>
<div class="t" style="left:311.70px;width:400px;text-align:center;top:317.61px;height:5.98px;line-height:5.98px;font-size:4.6px;color:#555;">80</div>
<div class="b" style="left:305.10px;top:305.20px;width:10.00px;height:10.00px;background:#fff;border:1.5px solid #0078d4;border-radius:50%"></div>
<div class="b" style="left:274.00px;top:333.50px;width:7.00px;height:7.00px;background:#4677b8;border-radius:1px"></div>
<svg class="b" style="left:274.5px;top:334px" width="6" height="6" viewBox="0 0 10 10"><path d="M2 5.2L4.2 7.4L8.2 2.8" stroke="#fff" stroke-width="1.5" fill="none"/></svg>
<div class="t" style="left:287.20px;top:332.84px;height:8.32px;line-height:8.32px;font-size:6.4px;color:#333;font-weight:bold;">平滑转角</div>
<div class="t" style="left:271.60px;top:350.64px;height:8.32px;line-height:8.32px;font-size:6.4px;color:#333;font-weight:bold;">转角半径<span style="font-weight:normal">: 5px</span></div>
<div class="b" style="left:272.10px;top:363.90px;width:244.80px;height:2.00px;background:#e2e2e2;border-radius:1px"></div>
<div class="b" style="left:275.80px;top:366.10px;width:0.80px;height:3.60px;background:#777"></div>
<div class="b" style="left:291.50px;top:366.10px;width:0.80px;height:2.40px;background:#b0b0b0"></div>
<div class="b" style="left:307.20px;top:366.10px;width:0.80px;height:2.40px;background:#b0b0b0"></div>
<div class="b" style="left:322.90px;top:366.10px;width:0.80px;height:2.40px;background:#b0b0b0"></div>
<div class="b" style="left:338.60px;top:366.10px;width:0.80px;height:2.40px;background:#b0b0b0"></div>
<div class="b" style="left:354.30px;top:366.10px;width:0.80px;height:3.60px;background:#777"></div>
<div class="b" style="left:370.00px;top:366.10px;width:0.80px;height:2.40px;background:#b0b0b0"></div>
<div class="b" style="left:385.70px;top:366.10px;width:0.80px;height:2.40px;background:#b0b0b0"></div>
<div class="b" style="left:401.40px;top:366.10px;width:0.80px;height:2.40px;background:#b0b0b0"></div>
<div class="b" style="left:417.10px;top:366.10px;width:0.80px;height:2.40px;background:#b0b0b0"></div>
<div class="b" style="left:432.80px;top:366.10px;width:0.80px;height:3.60px;background:#777"></div>
<div class="b" style="left:448.50px;top:366.10px;width:0.80px;height:2.40px;background:#b0b0b0"></div>
<div class="b" style="left:464.20px;top:366.10px;width:0.80px;height:2.40px;background:#b0b0b0"></div>
<div class="b" style="left:479.90px;top:366.10px;width:0.80px;height:2.40px;background:#b0b0b0"></div>
<div class="b" style="left:495.60px;top:366.10px;width:0.80px;height:2.40px;background:#b0b0b0"></div>
<div class="b" style="left:511.30px;top:366.10px;width:0.80px;height:3.60px;background:#777"></div>
<div class="t" style="left:76.20px;width:400px;text-align:center;top:372.31px;height:5.98px;line-height:5.98px;font-size:4.6px;color:#555;">0</div>
<div class="t" style="left:154.70px;width:400px;text-align:center;top:372.31px;height:5.98px;line-height:5.98px;font-size:4.6px;color:#555;">5</div>
<div class="t" style="left:233.20px;width:400px;text-align:center;top:372.31px;height:5.98px;line-height:5.98px;font-size:4.6px;color:#555;">10</div>
<div class="t" style="left:311.70px;width:400px;text-align:center;top:372.31px;height:5.98px;line-height:5.98px;font-size:4.6px;color:#555;">15</div>
<div class="b" style="left:350.20px;top:359.90px;width:10.00px;height:10.00px;background:#fff;border:1.5px solid #0078d4;border-radius:50%"></div>
<div class="b" style="left:274.00px;top:388.20px;width:7.00px;height:7.00px;background:#4677b8;border-radius:1px"></div>
<svg class="b" style="left:274.5px;top:388.7px" width="6" height="6" viewBox="0 0 10 10"><path d="M2 5.2L4.2 7.4L8.2 2.8" stroke="#fff" stroke-width="1.5" fill="none"/></svg>
<div class="t" style="left:287.20px;top:387.54px;height:8.32px;line-height:8.32px;font-size:6.4px;color:#333;font-weight:bold;">显示箭头</div>
<div class="t" style="left:271.60px;top:405.24px;height:8.32px;line-height:8.32px;font-size:6.4px;color:#333;font-weight:bold;">箭头大小<span style="font-weight:normal">: 12px</span></div>
<div class="b" style="left:428.50px;top:414.50px;width:10.00px;height:10.00px;background:#fff;border:1.5px solid #0078d4;border-radius:50%"></div>
<div class="b" style="left:530.00px;top:36.50px;width:7.00px;height:380.00px;background:#f1f1f1"></div>
<div class="b" style="left:530.00px;top:37.00px;width:7.00px;height:175.00px;background:#c9c9c9"></div>
</div>
</body></html>
